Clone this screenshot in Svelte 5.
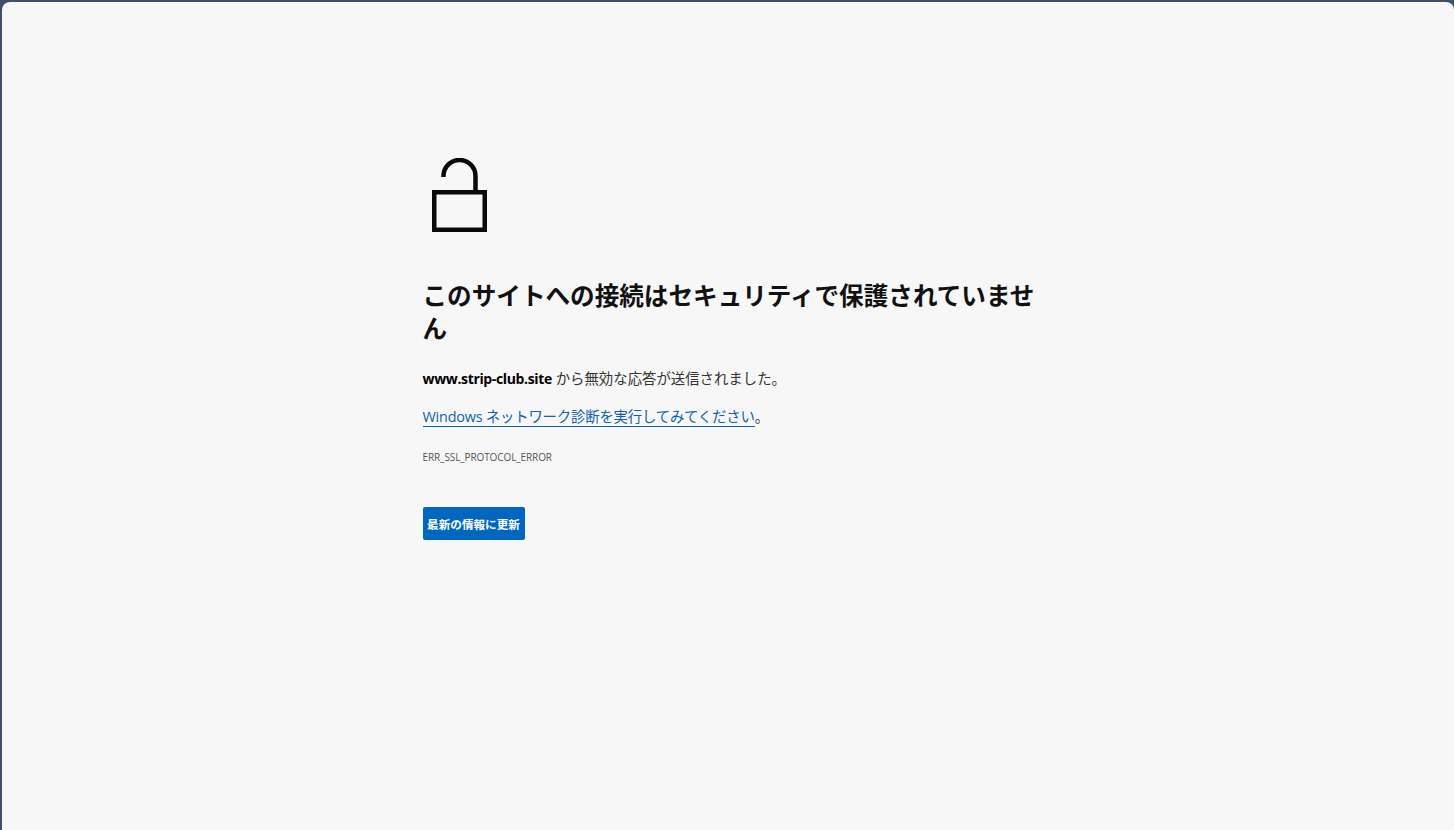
<script>
  const host = 'www.strip-club.site';
</script>

<div class="frame">
  <main class="content">
    <svg class="lock" width="55" height="74" viewBox="0 0 55 74" fill="none" stroke="#0a0a0a" stroke-width="4.5">
      <rect x="2.25" y="34.25" width="50.5" height="37.5" />
      <path d="M11.5 19V18a16 16 0 0 1 32 0V32" />
    </svg>
    <h1>このサイトへの接続はセキュリティで保護されていません</h1>
    <p class="msg"><strong>{host}</strong> から無効な応答が送信されました。</p>
    <p class="msg diag"><a href="#diag">Windows ネットワーク診断を実行してみてください</a>。</p>
    <div class="code">ERR_SSL_PROTOCOL_ERROR</div>
    <button>最新の情報に更新</button>
  </main>
</div>

<style>
  :global(body) {
    margin: 0;
    background: #3d4f6b;
  }

  .frame {
    height: 828px;
    margin: 2px 0 0 1.5px;
    background: #f7f7f7;
    border-radius: 8px 8px 0 0;
    font-family: "Open Sans", "Noto Sans CJK JP", sans-serif;
    color: #333;
    overflow: hidden;
  }

  .content {
    width: 620px;
    margin-left: 421px;
    padding-top: 156px;
  }

  .lock {
    display: block;
    margin-left: 9.5px;
  }

  h1 {
    margin: 47px 0 0;
    font-size: 24.6px;
    line-height: 33px;
    font-weight: 700;
    color: #111;
  }

  .msg {
    margin: 23px 0 0;
    font-size: 14.4px;
    line-height: 22px;
  }

  .diag {
    margin-top: 16px;
  }

  strong {
    color: #000;
    font-size: 14px;
    letter-spacing: -0.35px;
  }

  a {
    color: #0f62ab;
    letter-spacing: -0.2px;
    text-decoration: none;
    border-bottom: 1px solid #0f62ab;
  }

  .code {
    margin-top: 21px;
    font-size: 10px;
    letter-spacing: -0.1px;
    line-height: 16px;
    color: #555;
  }

  button {
    display: block;
    margin-top: 42px;
    width: 102px;
    height: 33px;
    padding: 0;
    border: 0;
    border-radius: 2px;
    background: #0067c0;
    color: #fff;
    font-family: inherit;
    font-size: 11.6px;
    font-weight: 700;
  }
</style>
